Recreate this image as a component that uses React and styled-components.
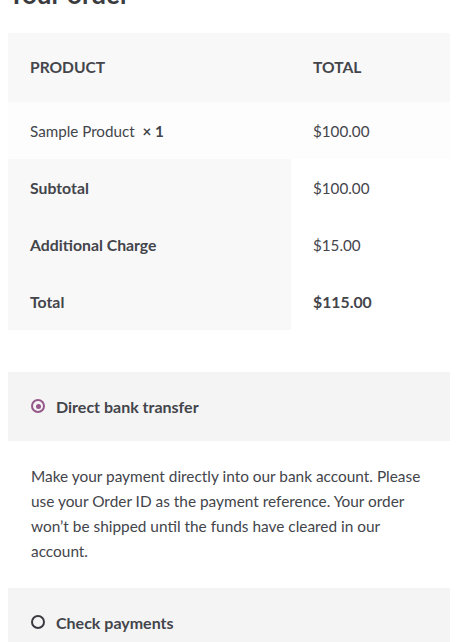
import React from "react";
import styled, { createGlobalStyle } from "styled-components";

const Global = createGlobalStyle`
  html, body { margin: 0; padding: 0; background: #fff; }
  body { font-family: "Lato", "Open Sans", sans-serif; color: #43454b; overflow: hidden; }
  * { box-sizing: border-box; }
`;

const Page = styled.div`
  width: 442px;
  margin-left: 8px;
`;

const Title = styled.h3`
  margin: -22px 0 0;
  height: 55px;
  font-size: 26px;
  line-height: 32px;
  font-weight: 700;
  color: #3a3b40;
`;

const Table = styled.table`
  width: 100%;
  border-collapse: collapse;
  border-spacing: 0;
  font-size: 15.2px;
  table-layout: fixed;
`;

const Col = styled.col`
  width: ${(p) => p.$w}px;
`;

const HeadCell = styled.th`
  background: #f8f8f8;
  height: 69px;
  padding: 0 22px;
  text-align: left;
  font-weight: 700;
  font-size: 15.6px;
  text-transform: uppercase;
  vertical-align: middle;
  padding-bottom: 2px;
`;

const Cell = styled.td`
  height: 57px;
  padding: 0 22px;
  text-align: left;
  vertical-align: middle;
  background: ${(p) => (p.$shade ? "#fdfdfd" : "#fff")};
  font-weight: ${(p) => (p.$bold ? 700 : 400)};
  font-size: ${(p) => (p.$bold ? "15.8px" : "15.2px")};
`;

const RowHead = styled.th`
  height: 57px;
  padding: 0 22px;
  text-align: left;
  vertical-align: middle;
  background: #f8f8f8;
  font-weight: 700;
  font-size: 15.8px;
`;

const Qty = styled.strong`
  font-weight: 700;
  margin-left: 4px;
`;

const Methods = styled.ul`
  list-style: none;
  margin: 42px 0 0;
  padding: 0;
`;

const Method = styled.li`
  margin: 0;
`;

const MethodHead = styled.div`
  background: #f4f4f4;
  height: 69px;
  display: flex;
  align-items: center;
  padding-left: 23px;
  gap: 11px;
  font-weight: 700;
  font-size: 16px;
`;

const Radio = styled.span`
  width: 14px;
  height: 14px;
  border-radius: 50%;
  border: 2px solid ${(p) => (p.$on ? "#96588a" : "#3a3b40")};
  display: inline-flex;
  align-items: center;
  justify-content: center;
  margin-top: -1px;
  &::after {
    content: "";
    width: 5px;
    height: 5px;
    border-radius: 50%;
    background: ${(p) => (p.$on ? "#96588a" : "transparent")};
  }
`;

const Desc = styled.div`
  padding: 23px 18px 24px 23px;
  font-size: 15.4px;
  line-height: 25px;
`;

export default function App() {
  return (
    <>
      <Global />
      <Page>
        <Title>Your order</Title>
        <Table>
          <colgroup>
            <Col $w={283} />
            <Col $w={159} />
          </colgroup>
          <thead>
            <tr>
              <HeadCell>Product</HeadCell>
              <HeadCell>Total</HeadCell>
            </tr>
          </thead>
          <tbody>
            <tr>
              <Cell $shade>
                Sample Product&nbsp;<Qty>× 1</Qty>
              </Cell>
              <Cell $shade>$100.00</Cell>
            </tr>
          </tbody>
          <tfoot>
            <tr>
              <RowHead>Subtotal</RowHead>
              <Cell>$100.00</Cell>
            </tr>
            <tr>
              <RowHead>Additional Charge</RowHead>
              <Cell>$15.00</Cell>
            </tr>
            <tr>
              <RowHead>Total</RowHead>
              <Cell $bold>$115.00</Cell>
            </tr>
          </tfoot>
        </Table>
        <Methods>
          <Method>
            <MethodHead>
              <Radio $on />
              Direct bank transfer
            </MethodHead>
            <Desc>
              Make your payment directly into our bank account. Please use your
              Order ID as the payment reference. Your order won’t be shipped
              until the funds have cleared in our account.
            </Desc>
          </Method>
          <Method>
            <MethodHead>
              <Radio />
              Check payments
            </MethodHead>
          </Method>
        </Methods>
      </Page>
    </>
  );
}
